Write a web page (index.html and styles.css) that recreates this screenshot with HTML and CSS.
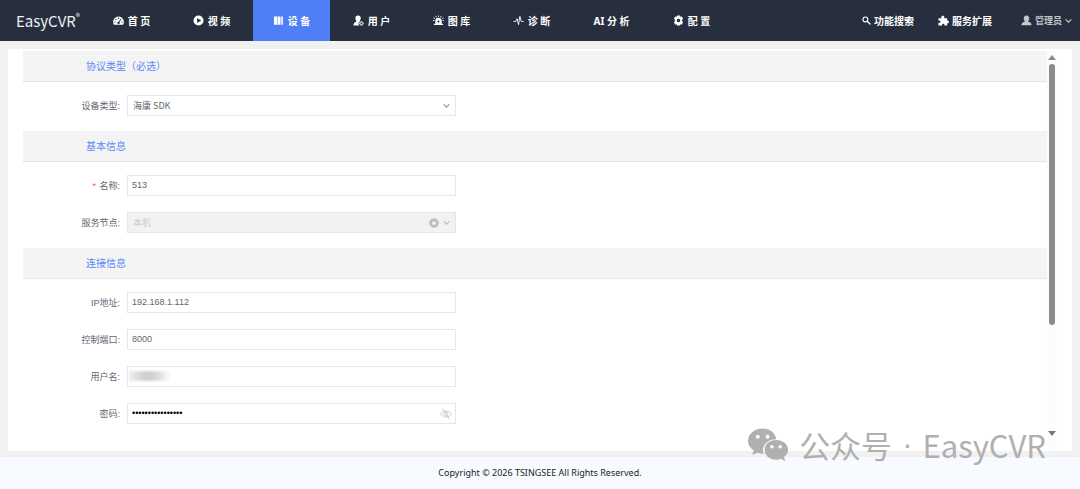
FILE: index.html
```html
<!DOCTYPE html>
<html lang="zh-CN">

<head>
    <meta charset="utf-8">
    <meta name="viewport" content="width=device-width, initial-scale=1">
    <title>EasyCVR</title>
    <link rel="stylesheet" href="styles.css">
</head>

<body>

    <header class="topbar">
        <a class="logo" href="#">EasyCVR<sup>®</sup></a>
        <nav class="menu">
            <a href="#">
                <svg class="icon" viewBox="0 0 24 24"><path fill="currentColor" fill-rule="evenodd" d="M12 3A12 12 0 0 0 2 21h20A12 12 0 0 0 12 3zM12 5.500a1.500 1.500 0 1 1 0 3 1.500 1.500 0 0 1 0-3zM6 8.500a1.500 1.500 0 1 1 0 3 1.500 1.500 0 0 1 0-3zM4.500 14a1.500 1.500 0 1 1 0 3 1.500 1.500 0 0 1 0-3zM19.500 14a1.500 1.500 0 1 1 0 3 1.500 1.500 0 0 1 0-3zM17 8l1.500 1-4.500 6.500a2.600 2.600 0 1 1-2-1z"/></svg>
                首 页
            </a>
            <a href="#">
                <svg class="icon" viewBox="0 0 24 24"><path fill="currentColor" fill-rule="evenodd" d="M12 1a11 11 0 1 0 0 22 11 11 0 0 0 0-22zM9 6.500l9 5.500-9 5.500z"/></svg>
                视 频
            </a>
            <a class="active" href="#">
                <svg class="icon" viewBox="0 0 24 24"><path fill="currentColor" d="M2 3h7v18H2zM10 3h6v18h-6zM17 3h2v18h-2zM20 3h2v18h-2z"/></svg>
                设 备
            </a>
            <a href="#">
                <svg class="icon" viewBox="0 0 24 24"><path fill="currentColor" d="M11 1c4 0 6 3 6 6 0 2-1 4-2 5.500V14a6 6 0 0 0-1 9H1c0-5 2-7 6-9v-1.500C6 11 5 9 5 7c0-3 2-6 6-6z"/><circle cx="18.500" cy="18.500" r="3.500" fill="none" stroke="currentColor" stroke-width="2"/><path stroke="currentColor" stroke-width="2" d="M18.500 14v2M18.500 21v2M14 18.500h2M21 18.500h2"/></svg>
                用 户
            </a>
            <a href="#">
                <svg class="icon" viewBox="0 0 24 24"><path fill="currentColor" fill-rule="evenodd" d="M5 19v-6a7 7 0 0 1 14 0v6h3v3H2v-3zM12 10l-3 5h2v3l4-5h-3z"/><path stroke="currentColor" stroke-width="2" d="M12 1v3M6 2l1.500 3M18 2l-1.500 3M1 6l3 2M23 6l-3 2M0 12h3M24 12h-3"/></svg>
                图 库
            </a>
            <a href="#">
                <svg class="icon" viewBox="0 0 24 24"><path fill="none" stroke="currentColor" stroke-width="2" stroke-linejoin="round" d="M1 14h5l3-6 3 13 3-18 3 11h5"/></svg>
                诊 断
            </a>
            <a href="#">AI 分 析</a>
            <a href="#">
                <svg class="icon" viewBox="0 0 24 24"><path fill="currentColor" fill-rule="evenodd" d="M9 1h6l1 3 3-1 3 5-2 2v4l2 2-3 5-3-1-1 3H9l-1-3-3 1-3-5 2-2v-4L2 8l3-5 3 1zM12 8a4 4 0 1 0 0 8 4 4 0 0 0 0-8z"/></svg>
                配 置
            </a>
        </nav>
        <div class="tools">
            <a href="#">
                <svg class="icon small" viewBox="0 0 24 24"><circle cx="9" cy="9" r="6.500" fill="none" stroke="currentColor" stroke-width="3"/><path stroke="currentColor" stroke-width="3.500" stroke-linecap="round" d="M14.500 14.500l7 7"/></svg>
                功能搜索
            </a>
            <a href="#">
                <svg class="icon" viewBox="0 0 24 24"><path fill="currentColor" d="M1 7h6.500C5 0 16 0 13.500 7H20v5c5-2 5 8 0 6v5h-6c1-5-6-5-5 0H1v-6c6 1 6-6 0-5z"/></svg>
                服务扩展
            </a>
            <button class="user" type="button">
                <svg class="icon" viewBox="0 0 24 24"><path fill="currentColor" d="M12 1c4 0 6 3 6 6.500 0 3-1.500 5-3 6.500 5 1 8 3 8 8.500H1C1 17 4 15 9 14c-1.500-1.500-3-3.500-3-6.500C6 4 8 1 12 1z"/></svg>
                管理员
                <svg class="caret" viewBox="0 0 12 12"><path d="M1 4l5 5 5-5"/></svg>
            </button>
        </div>
    </header>

    <main class="panel">
        <form class="form">
            <section>
                <h2>协议类型（必选）</h2>
                <div class="rows">
                    <div class="row">
                        <label for="type">设备类型:</label>
                        <div class="field">
                            <select id="type"><option>海康 SDK</option></select>
                            <span class="suffix"><svg class="caret" viewBox="0 0 12 12"><path d="M1 4l5 5 5-5"/></svg></span>
                        </div>
                    </div>
                </div>
            </section>

            <section>
                <h2>基本信息</h2>
                <div class="rows">
                    <div class="row">
                        <label for="name"><span class="required">*</span> 名称:</label>
                        <div class="field"><input id="name" type="text" value="513" required></div>
                    </div>
                    <div class="row">
                        <label for="node">服务节点:</label>
                        <div class="field">
                            <select id="node" disabled><option>本机</option></select>
                            <span class="suffix muted">
                                <svg class="gear" viewBox="0 0 24 24"><circle cx="12" cy="12" r="7.500" fill="none" stroke="currentColor" stroke-width="6"/><circle cx="12" cy="12" r="10.500" fill="none" stroke="currentColor" stroke-width="2.500" stroke-dasharray="4 2.600"/></svg>
                                <svg class="caret" viewBox="0 0 12 12"><path d="M1 4l5 5 5-5"/></svg>
                            </span>
                        </div>
                    </div>
                </div>
            </section>

            <section>
                <h2>连接信息</h2>
                <div class="rows">
                    <div class="row">
                        <label for="ip">IP地址:</label>
                        <div class="field"><input id="ip" type="text" value="192.168.1.112"></div>
                    </div>
                    <div class="row">
                        <label for="port">控制端口:</label>
                        <div class="field"><input id="port" type="text" value="8000"></div>
                    </div>
                    <div class="row">
                        <label for="account">用户名:</label>
                        <div class="field">
                            <input id="account" type="text">
                            <span class="mask"></span>
                        </div>
                    </div>
                    <div class="row">
                        <label for="password">密码:</label>
                        <div class="field">
                            <input id="password" class="secret" type="password" value="0000000000000000">
                            <button class="suffix eye" type="button" aria-label="显示密码">
                                <svg viewBox="0 0 24 24"><path d="M1 12c5-8 17-8 22 0-5 8-17 8-22 0zM5 1l14 22"/><circle cx="12" cy="12" r="4"/></svg>
                            </button>
                        </div>
                    </div>
                </div>
            </section>
        </form>

        <!-- scrollbar -->
        <div class="scrollbar">
            <span class="arrow up"></span>
            <div class="track"><div class="thumb"></div></div>
            <span class="arrow down"></span>
        </div>
    </main>

    <footer class="footer">Copyright © 2026 TSINGSEE All Rights Reserved.</footer>

    <div class="watermark">
        <svg viewBox="0 0 42 34"><path fill="currentColor" fill-rule="evenodd" d="M15 0C6 0 0 6 0 13c0 4 2 7 6 10l-2 4 6-2c2 1 4 1 6 1-3-8 4-15 13-15C28 4 22 0 15 0zM10 6.500a2 2 0 1 1 0 4 2 2 0 0 1 0-4zM20 6.500a2 2 0 1 1 0 4 2 2 0 0 1 0-4z"/><path fill="currentColor" fill-rule="evenodd" d="M29 12c-7 0-12 4.500-12 10s5 10 12 10c2 0 3 0 5-1l4 3-1-5c3-2 4-4 4-7 0-5.500-5-10-12-10zM24.500 17a1.800 1.800 0 1 1 0 3.600 1.800 1.800 0 0 1 0-3.600zM33 17a1.800 1.800 0 1 1 0 3.600 1.800 1.800 0 0 1 0-3.600z"/></svg>
        <span>公众号</span>
        <span class="dot">·</span>
        <span>EasyCVR</span>
    </div>

</body>

</html>
```
FILE: styles.css
```css
* {
    box-sizing: border-box;
}
body {
    display: flex;
    flex-direction: column;
    min-height: 100vh;
    margin: 0;
    background-color: #f1f1f1;
    color: #5f6672;
    font-family: "Liberation Sans", "Noto Sans CJK SC", sans-serif;
    font-size: 9px;
}
a {
    color: inherit;
    text-decoration: none;
}
button, input, select {
    font: inherit;
    color: inherit;
}

/* top bar */
.topbar {
    display: flex;
    height: 41px;
    padding: 0 8px 0 16px;
    background-color: #272f3e;
    color: #ffffff;
    font-family: "Noto Sans", "Noto Sans CJK SC", sans-serif;
}
.logo {
    display: flex;
    align-items: center;
    width: 77px;
    color: #eeeff1;
    font-family: "Noto Sans CJK SC", sans-serif;
    font-size: 15px;
}
.logo sup {
    align-self: flex-start;
    padding-top: 12px;
    font-size: 9px;
    line-height: 10px;
}
.menu {
    display: flex;
    gap: 3px;
    font-size: 10px;
    font-weight: bold;
}
.menu a {
    display: flex;
    align-items: center;
    justify-content: center;
    gap: 4px;
    width: 77px;
}
.menu .active {
    background-color: #4f7ef7;
}
.icon {
    width: 11px;
    height: 11px;
}
.icon.small {
    width: 9px;
    height: 9px;
}
.tools {
    display: flex;
    gap: 24px;
    margin-left: auto;
    font-size: 10px;
    font-weight: bold;
}
.tools a, .user {
    display: flex;
    align-items: center;
    gap: 3px;
}
.user {
    margin-left: 5px;
    padding: 0;
    border: 0;
    background: none;
    color: #c3c6cb;
    font-size: 9px;
}
.caret {
    width: 7px;
    height: 7px;
    fill: none;
    stroke: currentColor;
    stroke-width: 2;
}

/* form panel */
.panel {
    display: flex;
    flex: 1;
    margin: 8px 8px 6px;
    padding: 2px 15px 0;
    background-color: #ffffff;
}
.form {
    flex: 1;
}
h2 {
    height: 31px;
    margin: 0;
    padding-left: 63px;
    border-bottom: 1px solid #e6e6e6;
    background-color: #f4f4f4;
    color: #5c88f7;
    font-size: 10px;
    font-weight: normal;
    line-height: 32px;
}
.rows {
    display: grid;
    gap: 16px;
    padding: 13px 0 15px;
}
.row {
    display: grid;
    grid-template-columns: 97px minmax(0, 329px);
    gap: 7px;
    align-items: center;
}
.row label {
    text-align: right;
}
.required {
    margin-right: 1px;
    color: #e2603a;
}
.field {
    position: relative;
    height: 21px;
}
.field input, .field select {
    display: block;
    width: 100%;
    height: 100%;
    padding: 0 4px 2px;
    border: 1px solid #e6e6e8;
    border-radius: 0;
    background-color: #ffffff;
    appearance: none;
}
.field select {
    padding: 0 5px;
    font-family: "Noto Sans CJK SC", sans-serif;
}
.field select:disabled {
    background-color: #f2f2f2;
    color: #cccccc;
    opacity: 1;
}
.field .secret {
    color: #000000;
}
.suffix {
    position: absolute;
    top: 0;
    right: 6px;
    display: flex;
    align-items: center;
    gap: 4px;
    height: 100%;
    color: #8d95a3;
    pointer-events: none;
}
.suffix.muted {
    color: #bdbdbd;
}
.gear {
    width: 10px;
    height: 10px;
}
.eye {
    right: 4px;
    padding: 0;
    border: 0;
    background: none;
    color: #cfcfcf;
    pointer-events: auto;
}
.eye svg {
    width: 12px;
    height: 12px;
    fill: none;
    stroke: currentColor;
    stroke-width: 2;
}
/* hidden account name */
.mask {
    position: absolute;
    top: 5px;
    left: 2px;
    width: 42px;
    height: 10px;
    background: linear-gradient(to right, #eeeeee, #cfcfcf 40%, #d8d8d8 65%, #ffffff);
    filter: blur(1px);
}

/* scrollbar */
.scrollbar {
    display: flex;
    flex-direction: column;
    align-items: center;
    width: 10px;
    padding: 4px 0 15px;
    background-color: #fcfcfc;
}
.arrow {
    border: 4px solid transparent;
}
.up {
    border-top: 0;
    border-bottom: 5px solid #8b8b8b;
}
.down {
    border-top: 5px solid #777777;
    border-bottom: 0;
}
.track {
    flex: 1;
    width: 6px;
    padding: 4px 0;
}
.thumb {
    height: 72%;
    border-radius: 3px;
    background-color: #8b8b8b;
}

.footer {
    height: 32px;
    background-color: #f7fbff;
    color: #222222;
    font-family: "Noto Sans", sans-serif;
    font-size: 9px;
    line-height: 32px;
    text-align: center;
}

.watermark {
    position: absolute;
    right: 34px;
    bottom: 20px;
    display: flex;
    align-items: center;
    gap: 10px;
    color: #b0b0b0;
    font-family: "Noto Sans CJK SC", sans-serif;
    font-size: 31px;
    line-height: 48px;
    pointer-events: none;
}
.watermark svg {
    width: 41px;
    height: 34px;
}
.watermark .dot {
    font-family: "Liberation Sans", sans-serif;
}
```
